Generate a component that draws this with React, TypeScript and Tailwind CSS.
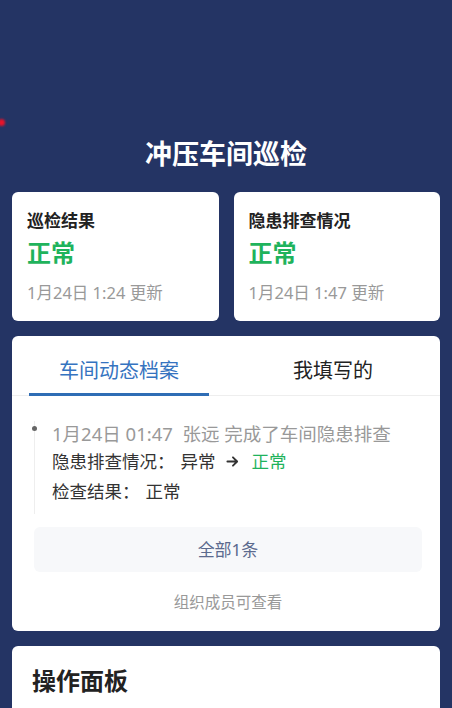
import React, { useState } from 'react';

const FONT = { fontFamily: '"Noto Sans", "Noto Sans CJK SC", sans-serif' };

interface StatCardProps {
  title: string;
  value: string;
  time: string;
}

function StatCard({ title, value, time }: StatCardProps) {
  return (
    <div className="flex-1 bg-white rounded-[6px] pl-[15px] pt-[17px] pb-[17px]">
      <div className="text-[17px] leading-[24px] font-bold text-[#222]">{title}</div>
      <div className="mt-[5px] text-[24px] leading-[30px] font-bold text-[#1fb35c]">{value}</div>
      <div className="mt-[14px] text-[16.5px] leading-[22px] text-[#999]">{time}</div>
    </div>
  );
}

export default function App() {
  const [tab, setTab] = useState(0);
  const tabs = ['车间动态档案', '我填写的'];

  return (
    <div className="relative min-h-[708px] bg-[#243464] overflow-hidden" style={FONT}>
      {/* stray red marker on the left edge */}
      <span className="absolute left-[-2px] top-[119px] w-[7px] h-[7px] rounded-full bg-[#e8132a] blur-[1px]" />

      <div className="pt-[135px] text-center text-white text-[27px] leading-[38px] font-bold">冲压车间巡检</div>

      <div className="mt-[19px] px-[12px] flex gap-[15px]">
        <StatCard title="巡检结果" value="正常" time="1月24日 1:24 更新" />
        <StatCard title="隐患排查情况" value="正常" time="1月24日 1:47 更新" />
      </div>

      <div className="mt-[15px] mx-[12px] bg-white rounded-[6px]">
        <div className="flex border-b border-[#eeeeee] h-[60px]">
          {tabs.map((t, i) => (
            <button
              key={t}
              type="button"
              onClick={() => setTab(i)}
              className={`relative flex-1 flex items-center justify-center pt-[11px] text-[20px] ${
                tab === i ? 'text-[#3573c0]' : 'text-[#222]'
              }`}
            >
              {t}
              {tab === i && (
                <span className="absolute bottom-[-1px] left-1/2 -translate-x-1/2 w-[180px] h-[3px] bg-[#2f6db5]" />
              )}
            </button>
          ))}
        </div>

        <div className="pl-[22px] pr-[18px] pt-[25px]">
          <div className="relative pl-[17px] pb-[10px] border-l border-[#eeeeee]">
            <span className="absolute left-[-3px] top-[5px] w-[5px] h-[5px] rounded-full bg-[#666]" />
            <div className="text-[18.5px] leading-[26px] text-[#999] whitespace-nowrap">
              1月24日 01:47&nbsp; 张远 完成了车间隐患排查
            </div>
            <div className="mt-[1px] text-[17.5px] leading-[26px] text-[#333] flex items-center whitespace-nowrap">
              <span>隐患排查情况：</span>
              <span className="ml-[6px]">异常</span>
              <svg className="ml-[10px] w-[13px] h-[13px]" viewBox="0 0 14 14" fill="none">
                <path d="M1.5 7h10M7.5 2.5 12 7l-4.5 4.5" stroke="#333" strokeWidth="2" strokeLinecap="round" strokeLinejoin="round" />
              </svg>
              <span className="ml-[13px] text-[#1fb35c]">正常</span>
            </div>
            <div className="mt-[4px] text-[17.5px] leading-[26px] text-[#333] flex whitespace-nowrap">
              <span>检查结果：</span>
              <span className="ml-[6px]">正常</span>
            </div>
          </div>

          <button
            type="button"
            className="mt-[13px] w-full h-[45px] rounded-[6px] bg-[#f7f8fa] text-[17px] text-[#5b6a8e]"
          >
            全部1条
          </button>

          <div className="pt-[18px] pb-[17px] text-center text-[15.5px] leading-[24px] text-[#999]">组织成员可查看</div>
        </div>
      </div>

      <div className="mt-[15px] mx-[12px] bg-white rounded-t-[6px] px-[20px] pt-[19px] pb-[20px]">
        <div className="text-[24px] leading-[32px] font-bold text-[#222]">操作面板</div>
      </div>
    </div>
  );
}
